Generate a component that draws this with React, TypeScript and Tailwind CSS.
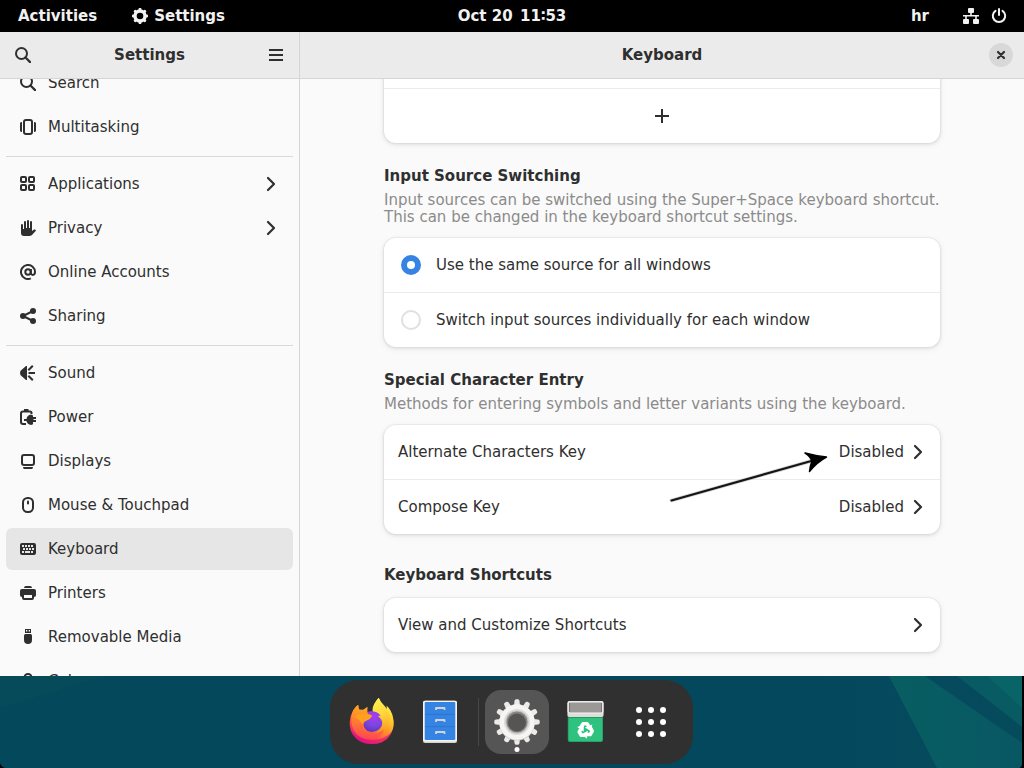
import type { ReactNode } from "react";

function Icon({ children, className = "" }: { children: ReactNode; className?: string }) {
  return (
    <svg viewBox="0 0 16 16" aria-hidden="true" className={`size-4 shrink-0 ${className}`} fill="currentColor">
      {children}
    </svg>
  );
}

const stroke = { fill: "none", stroke: "currentColor", strokeWidth: 2 } as const;

const SearchIcon = () => (
  <Icon>
    <circle cx="6.5" cy="6.5" r="5.5" {...stroke} />
    <path d="M10.5 10.5l4.6 4.6" {...stroke} strokeWidth={2.2} strokeLinecap="round" />
  </Icon>
);

const Chevron = () => (
  <Icon>
    <path d="M5 2l6 6-6 6" {...stroke} strokeWidth={2.2} strokeLinecap="round" strokeLinejoin="round" />
  </Icon>
);

const icons: Record<string, ReactNode> = {
  Search: <SearchIcon />,
  Multitasking: (
    <Icon>
      <rect x="4" y="1" width="8" height="14" rx="2" {...stroke} />
      <path d="M0 4.2Q.2 3 2 3v10Q.2 13 0 11.8zM16 4.2Q15.8 3 14 3v10q1.8 0 2-1.2z" />
    </Icon>
  ),
  Applications: (
    <Icon>
      <rect x="1" y="1" width="5" height="5" rx="1" {...stroke} />
      <rect x="9" y="1" width="5" height="5" rx="1" {...stroke} />
      <rect x="1" y="9" width="5" height="5" rx="1" {...stroke} />
      <rect x="9" y="9" width="5" height="5" rx="1" {...stroke} />
    </Icon>
  ),
  Privacy: (
    <Icon>
      <path d="M1 5a1 1 0 0 1 2 0v4h1V2a1 1 0 0 1 2 0v6h1V1a1 1 0 0 1 2 0v7h1V2a1 1 0 0 1 2 0v9l2-1.5q2-.3 1.9 1.2L12 15q-1 1-3 1H4q-3 0-3-3z" />
    </Icon>
  ),
  "Online Accounts": (
    <Icon>
      <circle cx="8" cy="8" r="2.7" {...stroke} />
      <path d="M10.9 5v4q.2 1.9 1.8 1.9Q15 10.8 15 8a7 7 0 1 0-4.2 6.4" {...stroke} />
    </Icon>
  ),
  Sharing: (
    <Icon>
      <circle cx="3" cy="8" r="3" />
      <circle cx="13" cy="3" r="3" />
      <circle cx="13" cy="13" r="3" />
      <path d="M13 3L3 8l10 5" {...stroke} />
    </Icon>
  ),
  Sound: (
    <Icon>
      <path d="M7 1v14H6l-4-3.5Q0 11 0 8t2-3.500L6 1z" />
      <path d="M8.500 8H15M8.300 5.300l4.500-4.500M8.300 10.700l4.500 4.500" {...stroke} />
    </Icon>
  ),
  Power: (
    <Icon>
      <path d="M11.5 5V4q0-1.5-1.5-1.5H3Q1 2.500 1 4.500V13q0 2 2 2h3" {...stroke} />
      <path d="M4 0h4.500v2.500H4zM16 8h-3V6.500L11 5.500Q7 6 6.500 10H4v2h2.500q.7 3.500 4.500 4l2-.8V13h3v-2h-2.500v-1H16z" />
    </Icon>
  ),
  Displays: (
    <Icon>
      <rect x="2" y="2" width="12" height="10" rx="2" {...stroke} />
      <path d="M3 14h10q-.2 2-1 2H4q-.8 0-1-2z" />
    </Icon>
  ),
  "Mouse & Touchpad": (
    <Icon>
      <rect x="3" y="1" width="10" height="14" rx="4.5" {...stroke} />
      <rect x="7" y="3.500" width="2" height="4" rx="1" />
    </Icon>
  ),
  Keyboard: (
    <Icon>
      <path
        fillRule="evenodd"
        d="M2 2h12q2 0 2 2v8q0 2-2 2H2q-2 0-2-2V4q0-2 2-2zM2 4v2h2V4zM5 4v2h2V4zM8 4v2h2V4zM11 4v2h2V4zM3 7v2h2V7zM6 7v2h2V7zM9 7v2h2V7zM12 7v2h2V7zM2 10v2h2v-2zM5 10v2h5v-2zM11 10v2h2v-2z"
      />
    </Icon>
  ),
  Printers: (
    <Icon>
      <path d="M4 3q0-2 2-2h4q2 0 2 2z" />
      <path fillRule="evenodd" d="M2 4h12q2 0 2 2v4q0 2-2 2v1q0 2-2 2H4q-2 0-2-2v-1q-2 0-2-2V6q0-2 2-2zM4 10v3h8v-3z" />
    </Icon>
  ),
  "Removable Media": (
    <Icon>
      <path fillRule="evenodd" d="M5 0h6v4H5zM6 1v1.500h1.300V1zM8.700 1v1.500H10V1z" />
      <path d="M4 6.500Q4 5 5.500 5h5Q12 5 12 6.500V11q0 4-4 4t-4-4z" />
    </Icon>
  ),
  Color: (
    <Icon>
      <circle cx="8" cy="4.500" r="3.500" {...stroke} />
      <circle cx="4.500" cy="11" r="3.500" {...stroke} />
      <circle cx="11.500" cy="11" r="3.500" {...stroke} />
    </Icon>
  ),
};

const groups: { name: string; sub?: boolean; current?: boolean }[][] = [
  [{ name: "Search" }, { name: "Multitasking" }],
  [
    { name: "Applications", sub: true },
    { name: "Privacy", sub: true },
    { name: "Online Accounts" },
    { name: "Sharing" },
  ],
  [
    { name: "Sound" },
    { name: "Power" },
    { name: "Displays" },
    { name: "Mouse & Touchpad" },
    { name: "Keyboard", current: true },
    { name: "Printers" },
    { name: "Removable Media" },
    { name: "Color" },
  ],
];

const gearTeeth = Array.from({ length: 8 }, (_, i) => i * 45);

function TopBar() {
  return (
    <header className="grid h-8 shrink-0 grid-cols-3 items-center bg-black text-[15px] font-bold text-[#f2f2f2]">
      <div className="flex items-center gap-[35px] pl-[18px]">
        <button type="button">Activities</button>
        <button type="button" className="flex items-center gap-1.5">
          <Icon>
            <circle cx="8" cy="8" r="5" fill="none" stroke="currentColor" strokeWidth="3.400" />
            {gearTeeth.map((a) => (
              <rect key={a} x="6.600" y="0" width="2.800" height="3" rx=".8" transform={`rotate(${a} 8 8)`} />
            ))}
          </Icon>
          Settings
        </button>
      </div>
      <button type="button" className="justify-self-center whitespace-pre">{"Oct 20\u200211\u223653"}</button>
      <div className="flex items-center justify-end pr-[17px]">
        <button type="button" className="mr-[34px]">hr</button>
        <button type="button" aria-label="System" className="flex items-center gap-3">
          <Icon>
            <rect x="5" y="0" width="6" height="5" rx="1" />
            <rect x="0" y="11" width="6" height="5" rx="1" />
            <rect x="10" y="11" width="6" height="5" rx="1" />
            <path d="M7.200 4h1.600v3H16v1.600h-2.200V12h-1.600V8.600H3.800V12H2.200V8.600H0V7h7.200z" />
          </Icon>
          <Icon>
            <path d="M4.500 2.800a6.200 6.200 0 1 0 7 0" {...stroke} strokeLinecap="round" />
            <path d="M8 1v6" {...stroke} strokeLinecap="round" />
          </Icon>
        </button>
      </div>
    </header>
  );
}

function Sidebar() {
  return (
    <aside className="flex w-[300px] shrink-0 flex-col border-r border-[#d5d5d5]">
      <div className="flex h-[47px] shrink-0 items-center justify-between border-b border-[#d5d5d5] bg-[#ebebeb] px-1.5">
        <button type="button" aria-label="Search" className="flex size-[34px] items-center justify-center">
          <SearchIcon />
        </button>
        <h2 className="font-bold">Settings</h2>
        <button type="button" aria-label="Main menu" className="flex size-[34px] items-center justify-center">
          <Icon>
            <path d="M1 2h14v2H1zM1 7h14v2H1zM1 12h14v2H1z" />
          </Icon>
        </button>
      </div>
      <nav className="min-h-0 flex-1 overflow-hidden px-1.5">
        <div className="-mt-[17px]">
          {groups.map((group, i) => (
            <ul key={i} className={`flex flex-col gap-0.5 pb-2 ${i > 0 ? "border-t border-[#d9d9d9] pt-1.5" : ""}`}>
              {group.map((item) => (
                <li key={item.name}>
                  <a
                    href="#"
                    aria-current={item.current ? "page" : undefined}
                    className={`flex h-[42px] items-center gap-3 rounded-md px-3.5 ${item.current ? "bg-[#e6e6e6]" : ""}`}
                  >
                    {icons[item.name]}
                    <span className="flex-1">{item.name}</span>
                    {item.sub && <Chevron />}
                  </a>
                </li>
              ))}
            </ul>
          ))}
        </div>
      </nav>
    </aside>
  );
}

const card =
  "divide-y divide-[#ebebeb] rounded-xl bg-white shadow-[0_0_0_1px_rgba(0,0,0,0.03),0_1px_3px_1px_rgba(0,0,0,0.07),0_2px_6px_2px_rgba(0,0,0,0.03)]";

function SourceOption({ label, checked = false }: { label: string; checked?: boolean }) {
  return (
    <label className="flex items-center gap-[15px] px-[17px] py-[17px]">
      <input
        type="radio"
        name="source"
        defaultChecked={checked}
        className="size-5 appearance-none rounded-full border-2 border-[#e0e0e0] bg-white checked:border-[6px] checked:border-[#3584e4]"
      />
      <span>{label}</span>
    </label>
  );
}

function LinkRow({ label, value }: { label: string; value?: string }) {
  return (
    <li>
      <button type="button" className="flex h-[54px] w-full items-center gap-1.5 px-3.5 text-left">
        <span className="flex-1">{label}</span>
        {value && <span>{value}</span>}
        <Chevron />
      </button>
    </li>
  );
}

function Arrow() {
  return (
    <svg viewBox="0 0 162 56" aria-hidden="true" className="pointer-events-none absolute top-6 right-[110px] h-14 w-[162px]">
      <path d="M3.500 51.500L145 11.500" fill="none" stroke="#777" strokeWidth="3.600" opacity=".35" strokeLinecap="round" />
      <path d="M3.500 51.500L145 11.500" fill="none" stroke="#151515" strokeWidth="2.200" strokeLinecap="round" />
      <path d="M158.500 8Q148 7 137 4q5 3 7 8-2 5-2.500 10.500Q149 13 158.500 8z" fill="#000" stroke="#000" strokeWidth="1.500" strokeLinejoin="round" />
    </svg>
  );
}

function KeyboardPanel() {
  return (
    <main className="flex min-w-0 flex-1 flex-col">
      <div className="grid h-[47px] shrink-0 grid-cols-[1fr_auto_1fr] items-center border-b border-[#d5d5d5] bg-[#ebebeb] px-[11px]">
        <h1 className="col-start-2 font-bold">Keyboard</h1>
        <button type="button" aria-label="Close" className="flex size-6 items-center justify-center justify-self-end rounded-full bg-[#d8d8d8]">
          <Icon>
            <path d="M5 5l6 6M11 5l-6 6" {...stroke} strokeWidth={2.200} strokeLinecap="round" />
          </Icon>
        </button>
      </div>
      <div className="min-h-0 flex-1 overflow-hidden px-6">
        <div className="mx-auto max-w-[556px]">
          <div className={`${card} -mt-3 pt-[21px]`}>
            <button type="button" aria-label="Add Input Source" className="flex h-[55px] w-full items-center justify-center border-t border-[#ebebeb]">
              <Icon>
                <path d="M7 1h2v6h6v2H9v6H7V9H1V7h6z" />
              </Icon>
            </button>
          </div>

          <section className="mt-[25px]">
            <h2 className="font-bold">Input Source Switching</h2>
            <p className="mt-[7px] mb-3 text-[#8b8b8b]">
              Input sources can be switched using the Super+Space keyboard shortcut.
              <br />
              This can be changed in the keyboard shortcut settings.
            </p>
            <div className={card}>
              <SourceOption label="Use the same source for all windows" checked />
              <SourceOption label="Switch input sources individually for each window" />
            </div>
          </section>

          <section className="mt-[25px]">
            <h2 className="font-bold">Special Character Entry</h2>
            <p className="mt-[7px] mb-3 text-[#8b8b8b]">Methods for entering symbols and letter variants using the keyboard.</p>
            <div className="relative">
              <ul className={card}>
                <LinkRow label="Alternate Characters Key" value="Disabled" />
                <LinkRow label="Compose Key" value="Disabled" />
              </ul>
              <Arrow />
            </div>
          </section>

          <section className="mt-[33px]">
            <h2 className="mb-3.5 font-bold">Keyboard Shortcuts</h2>
            <ul className={card}>
              <LinkRow label="View and Customize Shortcuts" />
            </ul>
          </section>
        </div>
      </div>
    </main>
  );
}

function FirefoxLogo() {
  return (
    <svg viewBox="0 0 48 48" className="size-12" aria-hidden="true">
      <defs>
        <linearGradient id="ffBody" x1=".8" y1=".1" x2=".25" y2=".95">
          <stop offset="0" stopColor="#fff44f" />
          <stop offset=".3" stopColor="#ffc229" />
          <stop offset=".55" stopColor="#ff8a2a" />
          <stop offset=".8" stopColor="#ff4050" />
          <stop offset="1" stopColor="#e31587" />
        </linearGradient>
        <linearGradient id="ffTail" x1=".4" y1="0" x2=".6" y2="1">
          <stop offset="0" stopColor="#fff44f" />
          <stop offset=".5" stopColor="#ffd23c" />
          <stop offset="1" stopColor="#ff9a22" stopOpacity=".2" />
        </linearGradient>
        <linearGradient id="ffHead" x1=".3" y1="0" x2=".2" y2="1">
          <stop offset="0" stopColor="#ffad1f" />
          <stop offset=".5" stopColor="#ff7a33" />
          <stop offset="1" stopColor="#ff4353" />
        </linearGradient>
        <radialGradient id="ffGlobe" cx=".6" cy=".25" r=".8">
          <stop offset="0" stopColor="#a83cf0" />
          <stop offset=".6" stopColor="#7a45e0" />
          <stop offset="1" stopColor="#5a32b8" />
        </radialGradient>
      </defs>
      <path
        fill="url(#ffBody)"
        d="M4.700 13.500Q5 11.500 7 10q.5-2 3.300-3-.3 2.700.8 4.700Q12 11.500 14 12.500L19.300 9v6h6q-3-6 5.400-15.200Q32.500 4.500 36 7.500l3 4-.5-4q5.500 5 6.700 13 2 8.500-3 16Q36 46 24 46T5.500 37.500Q1.500 32 1.700 24 2 18 4.700 13.500z"
      />
      <circle cx="24" cy="23.500" r="10.500" fill="url(#ffGlobe)" />
      <path
        fill="url(#ffTail)"
        d="M30.700-.2Q32.500 4.500 36 7.500q5 5 5.500 11 .5 9-5.500 13.500-5 4-11 3.500 8-2 9.500-8.500 0-5-4.500-9 1.500-.5 3 .3-2.500-4.300-8-5Q24 8 30.700-.2z"
      />
      <path
        fill="url(#ffHead)"
        d="M4.700 13.500L7 10l3.300-3q0 3.200 1.300 4.700 2-.5 4.400.3L19.300 9q-.8 4 .7 7 4 .5 4 2.500-2.500 3-6.500 4.500-4 3 0 8 3 4.500 9.500 4 5 0 9-4-3 10-13 10.500Q8 41 4 27.500q-1.500-8 .7-14z"
      />
      <path fill="#ffa11f" d="M7 19q3-4 9-3.500 4 1.600 8 2-1.500 4-6.500 5.500-3 1-3.500 4-1-5-7-8z" />
      <path fill="#dc1180" opacity=".6" d="M3.500 33q8 9 20.500 9t20.500-9Q40 46 24 46T3.500 33z" />
    </svg>
  );
}

function FilesLogo() {
  return (
    <svg viewBox="0 0 48 48" className="size-12" aria-hidden="true">
      <rect x="7" y="2.700" width="34" height="42.300" rx="2" fill="#d5d3cf" />
      <rect x="7" y="2.700" width="34" height="40.800" rx="2" fill="#f6f5f4" />
      <rect x="8.700" y="4" width="30.600" height="38" rx="1" fill="#3584e4" />
      <path d="M9 16.300h30M9 28.700h30" stroke="#2b74d0" strokeWidth="1" />
      {[10, 22, 34].map((y) => (
        <path key={y} d={`M20 ${y + 2}v-2h8.500v2`} fill="none" stroke="#d0d3d8" strokeWidth="1.800" strokeLinejoin="round" />
      ))}
    </svg>
  );
}

const teeth = Array.from({ length: 12 }, (_, i) => i * 30);

function SettingsLogo() {
  return (
    <svg viewBox="0 0 48 48" className="size-12" aria-hidden="true">
      <g transform="translate(24 24)">
        <g fill="#ecebea">
          {teeth.map((a) => (
            <path key={a} transform={`rotate(${a})`} d="M-3-16l.5-5Q-2.300-22.700-1-22.700h2Q2.300-22.700 2.500-21l.5 5z" />
          ))}
        </g>
        <circle r="17.800" cy=".8" fill="#d0cfcd" />
        <circle r="17.700" fill="#f6f5f4" />
        <circle r="13" fill="#dddcda" />
        <circle r="11.500" fill="#c4c2bf" />
        <circle r="10.500" fill="#85837f" />
        <circle r="9" cy=".5" fill="#555" />
      </g>
    </svg>
  );
}

function TrashLogo() {
  return (
    <svg viewBox="0 0 48 48" className="size-12" aria-hidden="true">
      <rect x="6.800" y="15" width="35.200" height="29" rx="2" fill="#26a269" />
      <rect x="7.800" y="15" width="33.200" height="28" rx="1.500" fill="#2ec27e" />
      <path d="M7 19.500h35" stroke="#1f9960" strokeWidth="1.200" />
      <rect x="6.400" y="3" width="36.200" height="16" rx="2" fill="#deddda" />
      <rect x="7.200" y="3.800" width="34.600" height="11.200" rx="1.500" fill="#9a9996" stroke="#f6f5f4" strokeWidth="1.200" />
      <path d="M8.500 5v9M40.500 5v9" stroke="#77767b" strokeWidth="1" />
      <g transform="translate(24.500 32)">
        {[0, 120, 240].map((a) => (
          <g key={a} transform={`rotate(${a})`}>
            <path d="M-4.800-2.300L-2.400-6.300H1.600L3.200-3.600" fill="none" stroke="#fff" strokeWidth="3.600" strokeLinejoin="round" />
            <path d="M-.6-2.400L6.800-5.600 5.600 1.200z" fill="#fff" />
          </g>
        ))}
      </g>
    </svg>
  );
}

function DockItem({ label, active = false, children }: { label: string; active?: boolean; children: ReactNode }) {
  return (
    <button
      type="button"
      aria-label={label}
      className={`relative flex size-16 items-center justify-center rounded-2xl ${active ? "bg-[#555]" : ""}`}
    >
      {children}
      {active && <span className="absolute bottom-0.5 left-1/2 size-[5px] -translate-x-1/2 rounded-full bg-white" />}
    </button>
  );
}

function Wallpaper() {
  return (
    <svg viewBox="0 0 1024 92" preserveAspectRatio="none" className="absolute inset-0 size-full" aria-hidden="true">
      <defs>
        <linearGradient id="sky">
          <stop offset="0" stopColor="#04485c" />
          <stop offset=".8" stopColor="#04485e" />
          <stop offset="1" stopColor="#064b5c" />
        </linearGradient>
        <linearGradient id="ray">
          <stop offset="0" stopColor="#075e62" />
          <stop offset="1" stopColor="#085763" />
        </linearGradient>
      </defs>
      <path fill="url(#sky)" d="M0 0h1024v92H0z" />
      <path fill="#064b5a" d="M0 0h105L0 32z" />
      <path fill="url(#ray)" d="M889 0h36l97 67v25h-85z" />
      <path fill="#085a63" d="M957 0h65v51z" />
      <path fill="#096468" d="M987 0h35v32z" />
      <path d="M1022 0h2v92h-5q3-1 3-4zM0 87q1 4 5 5H0z" />
    </svg>
  );
}

export default function App() {
  return (
    <div className="flex h-screen flex-col overflow-hidden bg-black font-['DejaVu_Sans',sans-serif] text-[15px] leading-[17px] text-[#2f2f2f]">
      <TopBar />
      <div className="flex min-h-0 flex-1 bg-[#fafafa]">
        <Sidebar />
        <KeyboardPanel />
      </div>
      <footer className="relative flex shrink-0 justify-center pt-1 pr-px pb-1">
        <Wallpaper />
        <div className="relative flex rounded-[28px] bg-[#303030] p-2.5">
          <DockItem label="Firefox"><FirefoxLogo /></DockItem>
          <div className="ml-1">
            <DockItem label="Files"><FilesLogo /></DockItem>
          </div>
          <div className="mx-1.5 my-2 w-px bg-[#474747]" />
          <DockItem label="Settings" active><SettingsLogo /></DockItem>
          <div className="mr-0.5 ml-1">
            <DockItem label="Trash"><TrashLogo /></DockItem>
          </div>
          <DockItem label="Show Applications">
            <svg viewBox="0 0 48 48" className="size-12" fill="#fff" aria-hidden="true">
              {[12, 24, 36].map((y) => [12, 24, 36].map((x) => <circle key={`${x}-${y}`} cx={x} cy={y} r="3" />))}
            </svg>
          </DockItem>
        </div>
      </footer>
    </div>
  );
}
